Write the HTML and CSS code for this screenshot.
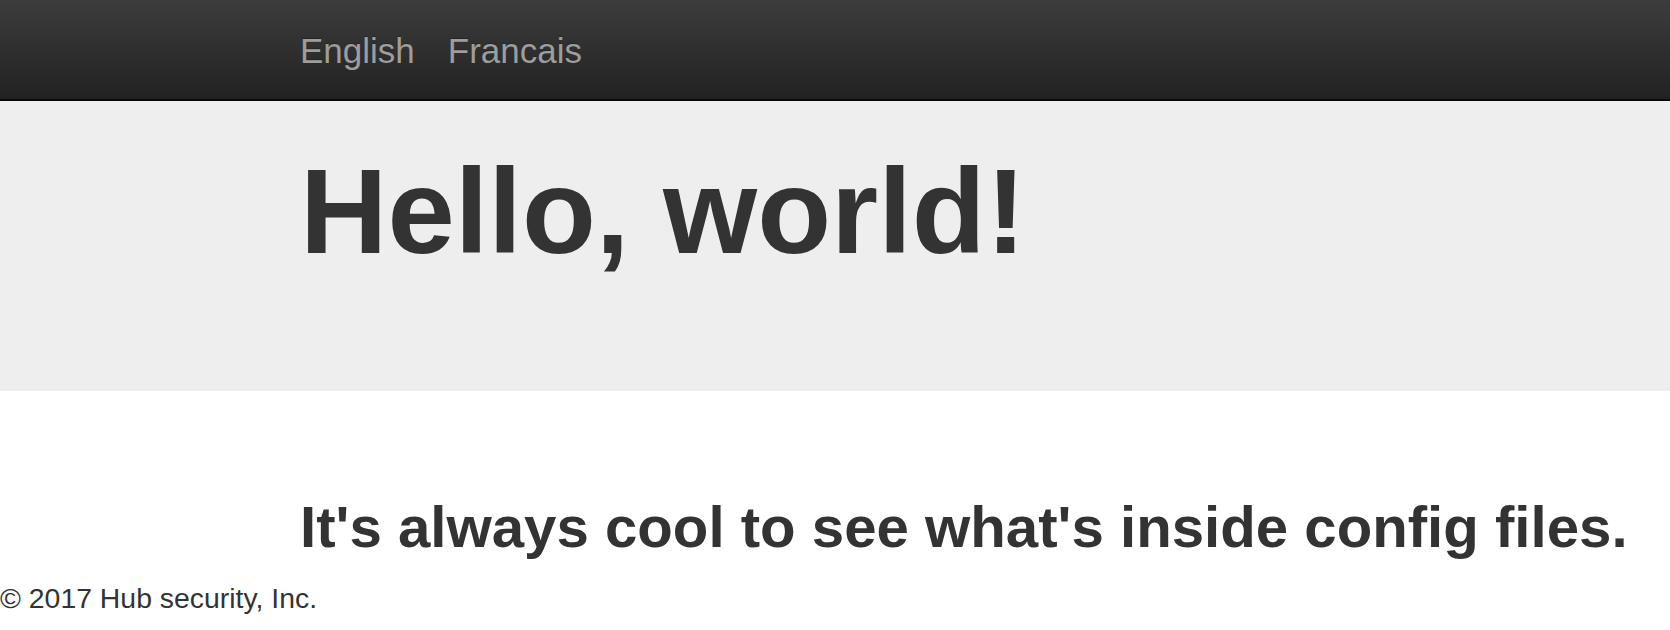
FILE: index.html
```html
<!DOCTYPE html>
<html lang="en">
<head>
<meta charset="utf-8">
<title>Hello, world!</title>
<link rel="stylesheet" href="styles.css">
</head>
<body>
  <nav class="navbar">
    <div class="container nav-inner">
      <a class="nav-link" href="#">English</a>
      <a class="nav-link" href="#">Francais</a>
    </div>
  </nav>
  <header class="jumbotron">
    <div class="container">
      <h1 class="hero-title">Hello, world!</h1>
    </div>
  </header>
  <main class="container">
    <h2 class="tagline">It's always cool to see what's inside config files.</h2>
  </main>
  <footer class="footer">
    <p class="copyright">&copy; 2017 Hub security, Inc.</p>
  </footer>
</body>
</html>
```

FILE: styles.css
```css
html, body {
  margin: 0;
  padding: 0;
}

body {
  font-family: "Liberation Sans", Arial, Helvetica, sans-serif;
  color: #333333;
  background: #ffffff;
}

.container {
  padding-left: 300px;
  padding-right: 0;
}

.navbar {
  height: 99px;
  background: linear-gradient(to bottom, #3c3c3c 0%, #222222 100%);
  border-bottom: 2px solid #080808;
}

.nav-inner {
  display: flex;
  gap: 33px;
}

.nav-link {
  font-size: 35px;
  line-height: 97px;
  padding-top: 2px;
  color: #9d9d9d;
  text-decoration: none;
  text-shadow: 0 -1px 0 rgba(0, 0, 0, 0.25);
}

.jumbotron {
  background: #eeeeee;
  height: 290px;
  padding-top: 44px;
  box-sizing: border-box;
}

.hero-title {
  margin: 0;
  font-size: 121px;
  line-height: 1.1;
  font-weight: 700;
  color: #333333;
}

.tagline {
  margin: 104px 0 0;
  font-size: 58.2px;
  line-height: 1.1;
  font-weight: 700;
  white-space: nowrap;
  color: #333333;
}

.footer {
  padding-top: 22px;
}

.copyright {
  margin: 0;
  font-size: 28.4px;
  line-height: 1.2;
  color: #333333;
}
```
